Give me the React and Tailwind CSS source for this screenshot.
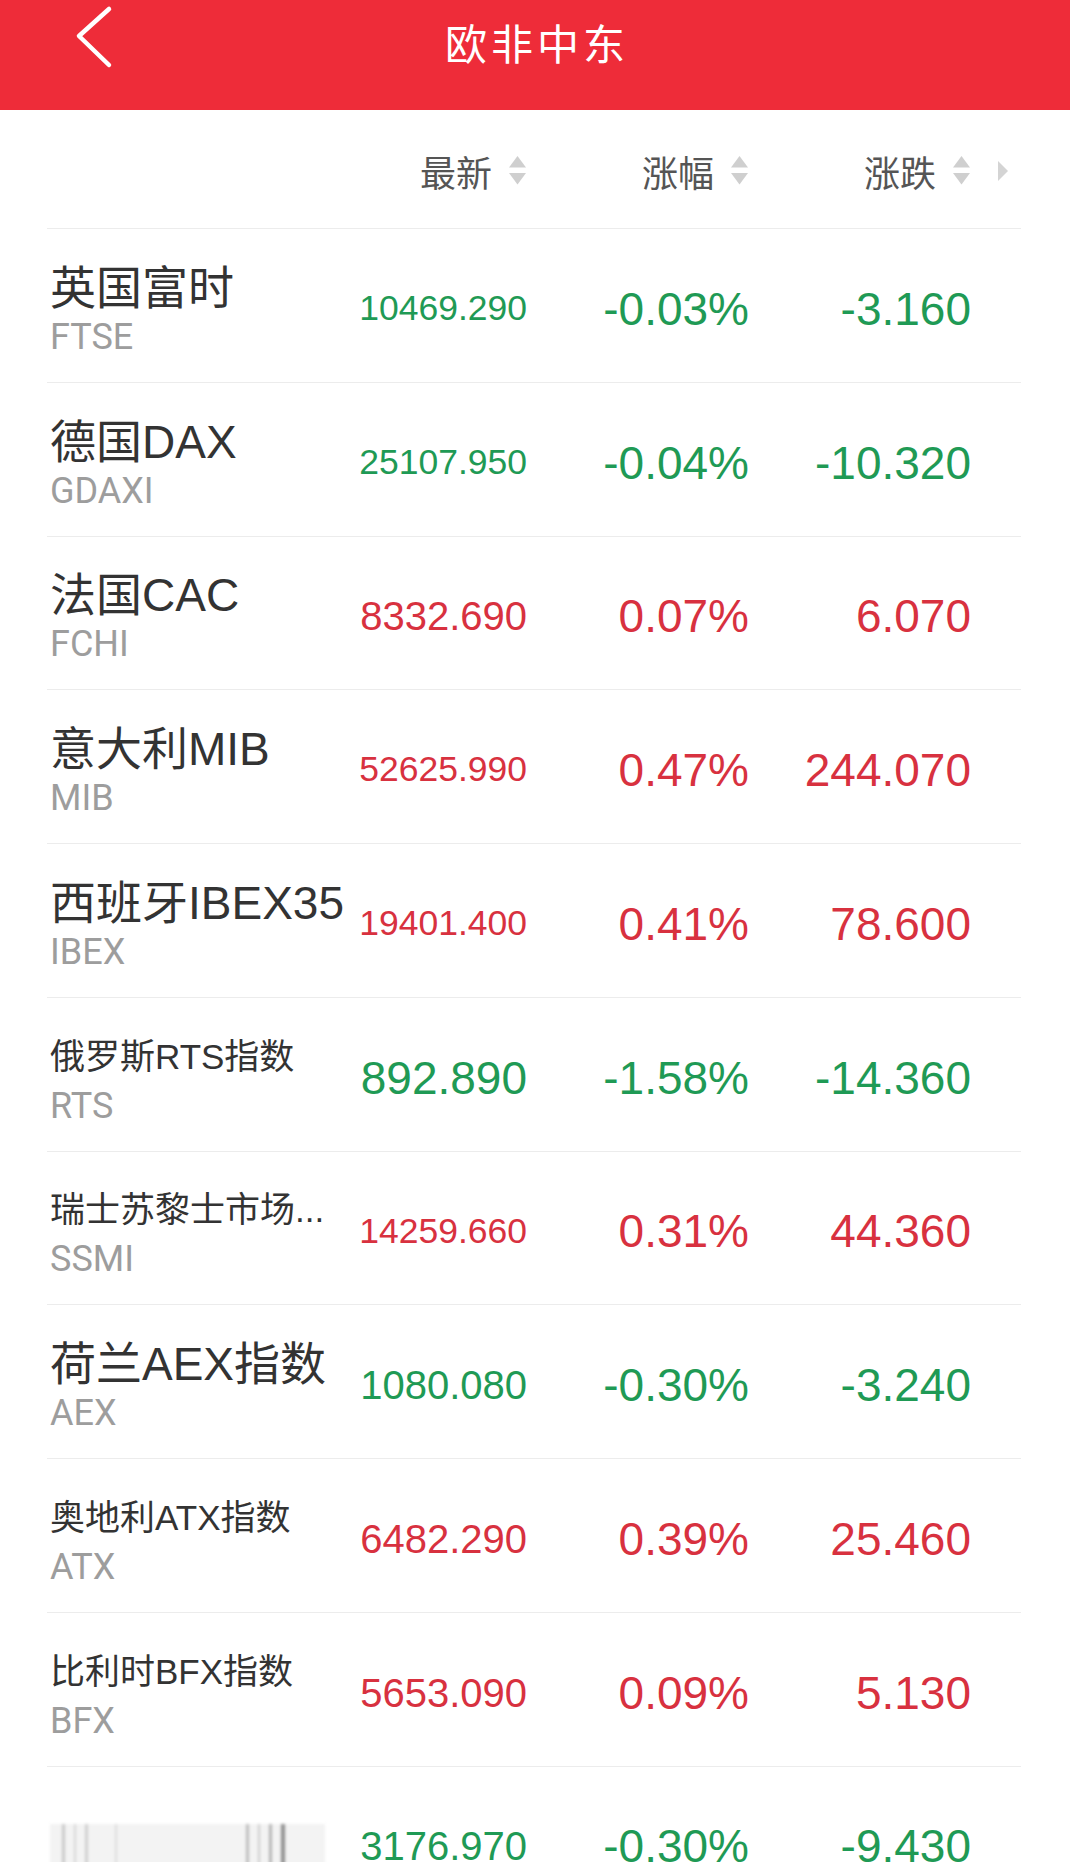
import React from 'react';

const UP = 'text-[#d8313f]';
const DOWN = 'text-[#1f9a55]';

// name size: long names drop to the smaller type
const BIG = 'text-[46px]';
const SMALL = 'text-[35px]';

const indices = [
    { name: '英国富时', code: 'FTSE', last: '10469.290', pct: '-0.03%', chg: '-3.160', up: false, nameSize: BIG, lastSize: 'text-[35.5px]' },
    { name: '德国DAX', code: 'GDAXI', last: '25107.950', pct: '-0.04%', chg: '-10.320', up: false, nameSize: BIG, lastSize: 'text-[35.5px]' },
    { name: '法国CAC', code: 'FCHI', last: '8332.690', pct: '0.07%', chg: '6.070', up: true, nameSize: BIG, lastSize: 'text-[40px]' },
    { name: '意大利MIB', code: 'MIB', last: '52625.990', pct: '0.47%', chg: '244.070', up: true, nameSize: BIG, lastSize: 'text-[35.5px]' },
    { name: '西班牙IBEX35', code: 'IBEX', last: '19401.400', pct: '0.41%', chg: '78.600', up: true, nameSize: BIG, lastSize: 'text-[35.5px]' },
    { name: '俄罗斯RTS指数', code: 'RTS', last: '892.890', pct: '-1.58%', chg: '-14.360', up: false, nameSize: SMALL, lastSize: 'text-[46px]' },
    { name: '瑞士苏黎士市场...', code: 'SSMI', last: '14259.660', pct: '0.31%', chg: '44.360', up: true, nameSize: SMALL, lastSize: 'text-[35.5px]' },
    { name: '荷兰AEX指数', code: 'AEX', last: '1080.080', pct: '-0.30%', chg: '-3.240', up: false, nameSize: BIG, lastSize: 'text-[40px]' },
    { name: '奥地利ATX指数', code: 'ATX', last: '6482.290', pct: '0.39%', chg: '25.460', up: true, nameSize: SMALL, lastSize: 'text-[40px]' },
    { name: '比利时BFX指数', code: 'BFX', last: '5653.090', pct: '0.09%', chg: '5.130', up: true, nameSize: SMALL, lastSize: 'text-[40px]' },
];

const SortArrows = () => (
    <svg width="19" height="31" viewBox="0 0 19 31" className="shrink-0">
        <path d="M9.5 1 L18 12.5 L1 12.5 Z" fill="#cfcfcf" />
        <path d="M1 18 L18 18 L9.5 29.5 Z" fill="#cfcfcf" />
    </svg>
);

const HeaderCell = ({ label, width }) => (
    <div className={`${width} flex items-center justify-end gap-[16px]`}>
        <span className="text-[36px] leading-none text-[#555]">{label}</span>
        <SortArrows />
    </div>
);

const NumberCell = ({ value, width, size, color }) => (
    <div className={`${width} text-right leading-none font-['Liberation_Sans',sans-serif] ${size} ${color}`}>
        {value}
    </div>
);

// smeared placeholder where the last name is hidden
const BlurredName = () => (
    <div className="flex h-[44px] w-[275px] items-stretch gap-[9px] bg-[#f3f3f3] pl-[12px] blur-[1.5px]">
        <div className="w-[3px] bg-[#c9c9c9]" />
        <div className="w-[2px] bg-[#d6d6d6]" />
        <div className="w-[3px] bg-[#cfcfcf]" />
        <div className="ml-[18px] w-[2px] bg-[#dcdcdc]" />
        <div className="ml-[120px] w-[3px] bg-[#bdbdbd]" />
        <div className="w-[2px] bg-[#cbcbcb]" />
        <div className="w-[3px] bg-[#b5b5b5]" />
        <div className="w-[4px] bg-[#8f8f8f]" />
    </div>
);

const Row = ({ item, hidden }) => {
    const color = item.up ? UP : DOWN;
    return (
        <div className="flex h-[153.75px] items-center border-b border-[#ececec] pt-[7px]">
            <div className="flex w-[300px] flex-col pl-[3px]">
                {hidden ? (
                    <BlurredName />
                ) : (
                    <>
                        <span className={`${item.nameSize} leading-[56px] whitespace-nowrap text-[#333] font-['Liberation_Sans','Noto_Sans_CJK_SC',sans-serif]`}>
                            {item.name}
                        </span>
                        <span className="text-[36px] leading-[42px] text-[#9d9d9d] font-['Roboto',sans-serif]">{item.code}</span>
                    </>
                )}
            </div>
            <NumberCell value={item.last} width="w-[180px]" size={item.lastSize} color={color} />
            <NumberCell value={item.pct} width="w-[222px]" size="text-[46px]" color={color} />
            <NumberCell value={item.chg} width="w-[222px]" size="text-[46px]" color={color} />
        </div>
    );
};

const App = () => {
    return (
        <div className="h-[1862px] overflow-hidden bg-white font-['Noto_Sans_CJK_SC',sans-serif]">
            <header className="grid h-[110px] grid-cols-[1fr_auto_1fr] items-start bg-[#ee2c39]">
                <div className="pl-[75px] pt-[5px]">
                    <svg width="40" height="64" viewBox="0 0 40 64">
                        <path d="M34 4 L4 31 L34 60" fill="none" stroke="#fff" strokeWidth="4.5" strokeLinecap="round" strokeLinejoin="round" />
                    </svg>
                </div>
                <h1 className="pl-[4px] text-[42px] leading-[84px] tracking-[4px] text-white">欧非中东</h1>
                <div />
            </header>

            <div className="ml-[47px] mr-[49px]">
                <div className="flex h-[119px] items-center border-b border-[#ececec] pt-[3px]">
                    <div className="w-[300px]" />
                    <HeaderCell label="最新" width="w-[180px]" />
                    <HeaderCell label="涨幅" width="w-[222px]" />
                    <HeaderCell label="涨跌" width="w-[222px]" />
                    <svg width="12" height="22" viewBox="0 0 12 22" className="ml-[26px]">
                        <path d="M1 1 L11 11 L1 21 Z" fill="#d4d4d4" />
                    </svg>
                </div>

                {indices.map((item) => (
                    <Row key={item.code} item={item} />
                ))}
                <Row hidden item={{ last: '3176.970', pct: '-0.30%', chg: '-9.430', up: false, lastSize: 'text-[40px]' }} />
            </div>
        </div>
    );
};

export default App;
